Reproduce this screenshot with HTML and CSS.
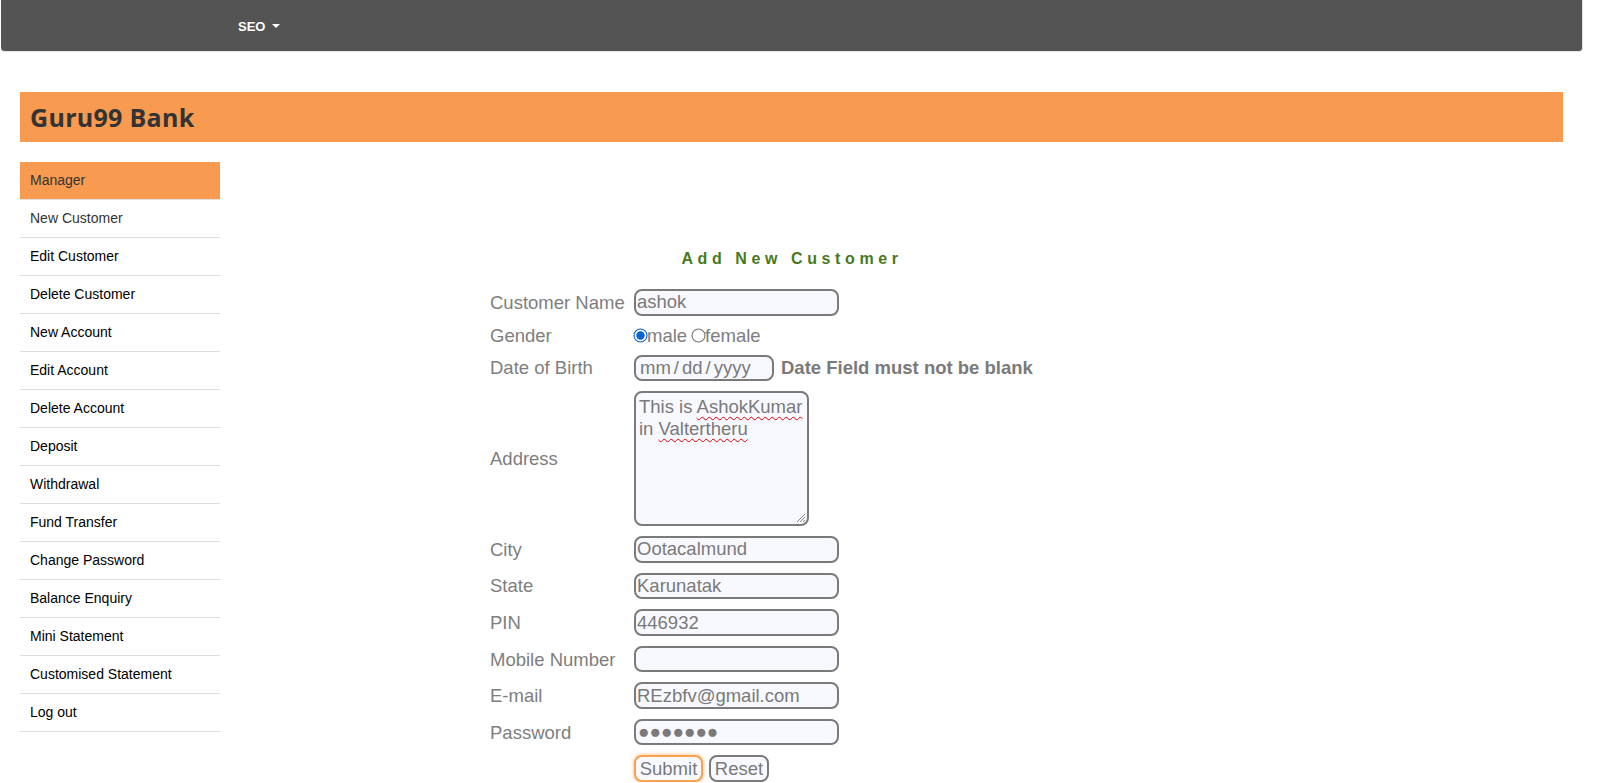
FILE: index.html
```html
<!DOCTYPE html>
<html lang="en">
<head>
<meta charset="utf-8">
<title>Guru99 Bank - Add New Customer</title>
<link rel="stylesheet" href="styles.css">
</head>
<body>
<nav class="navbar">
  <div class="nav-item">SEO <span class="caret"></span></div>
</nav>
<div class="page">
  <header class="brand">Guru99 Bank</header>
  <div class="layout">
    <ul class="menu">
      <li class="menu-head">Manager</li>
      <li class="menu-soft">New Customer</li>
      <li>Edit Customer</li>
      <li>Delete Customer</li>
      <li>New Account</li>
      <li>Edit Account</li>
      <li>Delete Account</li>
      <li>Deposit</li>
      <li>Withdrawal</li>
      <li>Fund Transfer</li>
      <li>Change Password</li>
      <li>Balance Enquiry</li>
      <li>Mini Statement</li>
      <li>Customised Statement</li>
      <li>Log out</li>
    </ul>
    <main class="content">
      <form class="customer-form">
        <h2 class="form-title">Add New Customer</h2>
        <div class="form-grid">
          <label class="lbl">Customer Name</label>
          <div class="field"><input class="txt" type="text" value="ashok"></div>

          <label class="lbl">Gender</label>
          <div class="field radios">
            <input class="rad" type="radio" name="g" checked><span>male</span>
            <input class="rad rad-2" type="radio" name="g"><span>female</span>
          </div>

          <label class="lbl">Date of Birth</label>
          <div class="field">
            <input class="txt dob" type="date">
            <span class="err">Date Field must not be blank</span>
          </div>

          <label class="lbl">Address</label>
          <div class="field">
            <div class="area" role="textbox">This is <span class="spell">AshokKumar</span><br>in <span class="spell">Valtertheru</span><svg class="grip" width="11" height="11" viewBox="0 0 11 11"><path d="M10 2 L2 10 M10 5 L5 10 M10 8 L8 10" stroke="#888" stroke-width="1" fill="none"/></svg></div>
          </div>

          <label class="lbl">City</label>
          <div class="field"><input class="txt" type="text" value="Ootacalmund"></div>

          <label class="lbl">State</label>
          <div class="field"><input class="txt" type="text" value="Karunatak"></div>

          <label class="lbl">PIN</label>
          <div class="field"><input class="txt" type="text" value="446932"></div>

          <label class="lbl">Mobile Number</label>
          <div class="field"><input class="txt" type="text" value=""></div>

          <label class="lbl">E-mail</label>
          <div class="field"><input class="txt" type="text" value="REzbfv@gmail.com"></div>

          <label class="lbl">Password</label>
          <div class="field"><input class="txt pw" type="text" value="●●●●●●●"></div>

          <span class="lbl"></span>
          <div class="field buttons">
            <button type="button" class="btn btn-submit">Submit</button>
            <button type="button" class="btn btn-reset">Reset</button>
          </div>
        </div>
      </form>
    </main>
  </div>
</div>
</body>
</html>
```

FILE: styles.css
```css
html, body {
  margin: 0;
  padding: 0;
  background: #fff;
}

body {
  font-family: "Liberation Sans", Arial, sans-serif;
  color: #000;
}

/* top navbar */
.navbar {
  box-sizing: border-box;
  margin-left: 1px;
  width: 1582px;
  height: 52px;
  background: #545454;
  border-right: 1px solid #e4e4e4;
  border-bottom: 1px solid #e4e4e4;
  border-radius: 0 0 4px 4px;
  display: flex;
  align-items: center;
  padding-left: 237px;
}

.nav-item {
  color: #fff;
  font-weight: bold;
  font-size: 13px;
  display: flex;
  align-items: center;
  margin-top: 1px;
}

.caret {
  display: inline-block;
  width: 0;
  height: 0;
  margin-left: 7px;
  border-top: 4px solid #fff;
  border-left: 4px solid transparent;
  border-right: 4px solid transparent;
}

/* page */
.page {
  margin-top: 40px;
  padding: 0 37px 0 20px;
}

.brand {
  box-sizing: border-box;
  height: 50px;
  background: #f89b50;
  color: #333;
  font-family: "Open Sans", "Liberation Sans", sans-serif;
  font-weight: 700;
  font-size: 25px;
  letter-spacing: 0.3px;
  padding-left: 10px;
  display: flex;
  align-items: center;
}

.layout {
  display: flex;
  margin-top: 20px;
}

/* sidebar menu */
.menu {
  list-style: none;
  margin: 0;
  padding: 0;
  width: 200px;
  flex: none;
}

.menu li {
  height: 37px;
  line-height: 37px;
  padding: 0 10px;
  font-size: 14px;
  color: #000;
  border-bottom: 1px solid #dedede;
}

.menu .menu-head {
  background: #f89b50;
  color: #333;
}

.menu .menu-soft {
  color: #333;
}

/* main */
.content {
  flex: 1;
  padding-top: 88px;
  padding-left: 270px;
}

.customer-form {
  width: 600px;
}

.form-title {
  margin: 0 0 21px;
  padding-left: 4px;
  text-align: center;
  font-size: 16px;
  line-height: 18px;
  font-weight: bold;
  letter-spacing: 4.6px;
  color: #487a1b;
}

.form-grid {
  display: grid;
  grid-template-columns: 144px auto;
  row-gap: 10.05px;
  align-items: center;
  font-size: 18.5px;
  line-height: 19px;
  color: #7e7e7e;
}

.field {
  display: flex;
  align-items: center;
}

.txt {
  box-sizing: border-box;
  width: 205px;
  height: 26.5px;
  margin: 0;
  padding: 0 1px;
  border: 2px solid #7a7a7a;
  border-radius: 8px;
  background: #f8f8ff;
  color: #7a7a7a;
  font-family: "Liberation Sans", Arial, sans-serif;
  font-size: 18.5px;
  outline: none;
}

.pw {
  font-size: 19px;
  letter-spacing: 0;
  padding-left: 2px;
  color: #7a7a7a;
}

.dob {
  width: 140px;
  padding: 0 3px;
}

.dob::-webkit-calendar-picker-indicator {
  display: none;
}

.dob::-webkit-datetime-edit {
  padding: 0;
}

.dob::-webkit-datetime-edit-text {
  padding: 0 2px;
}

.err {
  margin-left: 7px;
  font-weight: bold;
  color: #7a7a7a;
  white-space: nowrap;
}

.radios {
  height: 19px;
}

.rad {
  width: 13px;
  height: 13px;
  margin: 0;
  accent-color: #0a63d6;
  transform: scale(1.08);
}

.rad-2 {
  margin-left: 5px;
}

.area {
  position: relative;
  box-sizing: border-box;
  width: 175px;
  height: 135px;
  border: 2px solid #7a7a7a;
  border-radius: 8px;
  background: #f8f8ff;
  color: #7a7a7a;
  padding: 3px 3px;
  line-height: 21.4px;
}

.spell {
  text-decoration: underline wavy #e00000;
  text-decoration-thickness: 1px;
  text-underline-offset: 3px;
}

.grip {
  position: absolute;
  right: 1px;
  bottom: 1px;
}

.buttons {
  gap: 6px;
}

.btn {
  box-sizing: border-box;
  height: 27px;
  margin: 0;
  padding: 0 3px;
  border-radius: 8px;
  background: #f8f8ff;
  color: #7a7a7a;
  font-family: "Liberation Sans", Arial, sans-serif;
  font-size: 18.5px;
  line-height: 21px;
}

.btn-submit {
  width: 69px;
  border: 2px solid #f7a24f;
  box-shadow: 0 0 3px 1px rgba(248, 166, 90, 0.55);
}

.btn-reset {
  width: 60px;
  border: 2px solid #7a7a7a;
}
```
